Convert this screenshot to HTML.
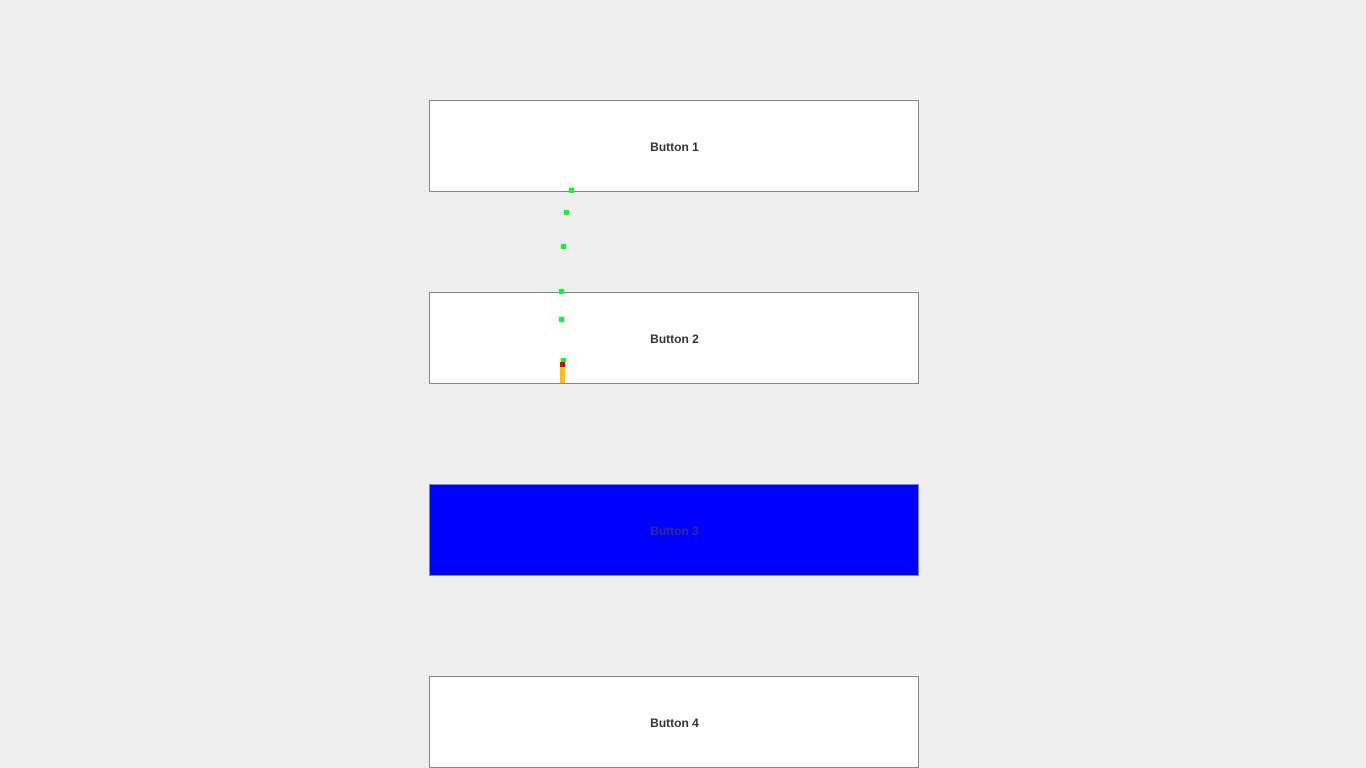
<!DOCTYPE html>
<html><head><meta charset="utf-8"><style>
html,body{margin:0;padding:0;background:#eeeeee;width:1366px;height:768px;overflow:hidden;position:relative;font-family:"Liberation Sans",Arial,sans-serif}
.b{position:absolute;left:429px;width:487px;height:88px;padding:2px 0 0 1px;border:1px solid #7a8a99;background:#fff;display:flex;align-items:center;justify-content:center;font-weight:bold;font-size:12px;color:#333}
.d{position:absolute;width:5px;height:5px;background:#00ff22}
</style></head><body>
<div class="b" style="top:100px">Button 1</div>
<div class="b" style="top:292px">Button 2</div>
<div class="b" style="top:484px;background:#0000ff;color:#30307e">Button 3</div>
<div class="b" style="top:676px">Button 4</div>
<div class="d" style="left:569px;top:188px"></div>
<div class="d" style="left:564px;top:210px"></div>
<div class="d" style="left:561px;top:244px"></div>
<div class="d" style="left:559px;top:289px"></div>
<div class="d" style="left:559px;top:317px"></div>
<div style="position:absolute;left:560px;top:366px;width:5px;height:17px;background:#ffc000"></div>
<div style="position:absolute;left:560px;top:362px;width:5px;height:5px;background:#e00000"></div>
<div class="d" style="left:561px;top:358px;height:4px"></div>
</body></html>
